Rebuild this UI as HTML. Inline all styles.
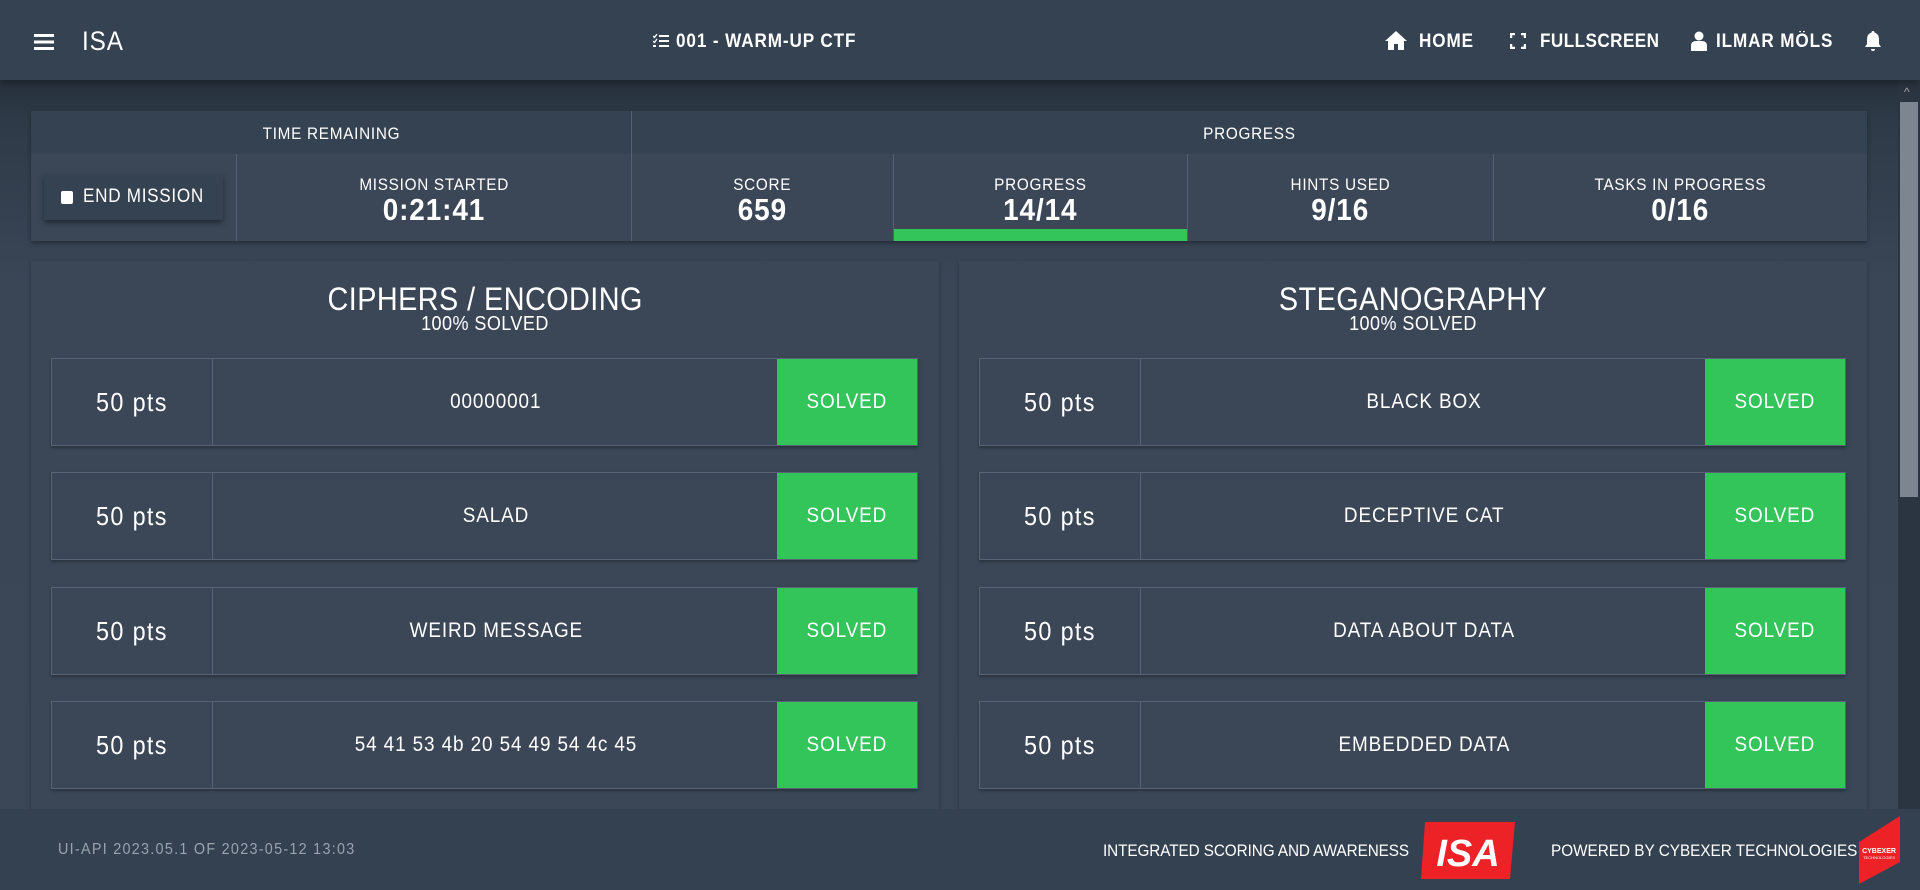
<!DOCTYPE html>
<html><head><meta charset="utf-8"><style>
*{box-sizing:border-box;margin:0;padding:0}
body{width:1920px;height:890px;overflow:hidden;background:#364352;font-family:"Liberation Sans",sans-serif;color:#fff;position:relative}
.hdr{position:absolute;left:0;top:0;width:1920px;height:80px;background:#344251;box-shadow:0 3px 8px rgba(0,0,0,.35);z-index:3}
.main{position:absolute;left:0;top:80px;width:1898px;height:729px;background:linear-gradient(#27313d 0,#2e3a47 40px,#3a4656 200px,#3b4757 100%)}
.sb{position:absolute;left:1898px;top:80px;width:22px;height:729px;background:#2b3541}
.sb .th{position:absolute;left:2px;top:22px;width:18px;height:395px;background:#7d8590}
.abs{position:absolute}
.t{position:absolute;white-space:nowrap;text-align:center}
.L{transform:scaleX(.9);transform-origin:0 0}
.c{display:inline-block;transform:scaleX(.9)}
.panel{position:absolute;background:#3b4757;box-shadow:0 2px 4px rgba(0,0,0,.35)}
.cell{position:absolute;top:43px;height:87px;border-left:1px solid #566273}
.lbl{font-size:17px;position:absolute;top:21px;width:100%;text-align:center;letter-spacing:.8px}
.val{font-size:31px;font-weight:bold;position:absolute;top:38px;width:100%;text-align:center;letter-spacing:1px}
.row{position:absolute;left:20px;width:867px;height:88px;border:1px solid #586476;background:#3b4757;box-shadow:0 2px 3px rgba(0,0,0,.3)}
.row .p{position:absolute;left:0;top:0;width:161px;height:86px;border-right:1px solid #586476;font-size:26px;line-height:86px;text-align:center;letter-spacing:1.5px}
.row .n{position:absolute;left:161px;top:0;width:566px;height:86px;font-size:21px;line-height:86px;text-align:center;letter-spacing:1px}
.row .s{position:absolute;right:0;top:0;width:140px;height:86px;background:#33c45a;font-size:21px;line-height:86px;text-align:center;letter-spacing:1px}
.foot{position:absolute;left:0;top:809px;width:1920px;height:81px;background:#334150}
</style></head><body>
<div class="hdr">
 <svg class="abs" style="left:34px;top:34px" width="20" height="16"><rect y="0" width="20" height="3" fill="#fff"/><rect y="6.5" width="20" height="3" fill="#fff"/><rect y="13" width="20" height="3" fill="#fff"/></svg>
 <div class="t L" style="left:82px;top:26px;font-size:27px;letter-spacing:1px">ISA</div>
 <svg class="abs" style="left:653px;top:34px" width="16" height="14" fill="#fff"><path d="M0 2l1.5 1.5L4 0" stroke="#fff" fill="none" stroke-width="1.3"/><rect x="6" y="1" width="10" height="2"/><path d="M0 7l1.5 1.5L4 5" stroke="#fff" fill="none" stroke-width="1.3"/><rect x="6" y="6" width="10" height="2"/><rect x="0" y="11" width="3" height="2"/><rect x="6" y="11" width="10" height="2"/></svg>
 <div class="t L" style="left:676px;top:31px;font-size:19px;font-weight:bold;letter-spacing:1px">001 - WARM-UP CTF</div>
 <svg class="abs" style="left:1385px;top:31px" width="22" height="19" fill="#fff"><path d="M11 0L0 10h3v9h6v-6h4v6h6v-9h3z"/></svg>
 <div class="t L" style="left:1419px;top:31px;font-size:19px;font-weight:bold;letter-spacing:1px">HOME</div>
 <svg class="abs" style="left:1510px;top:33px" width="16" height="16" fill="none" stroke="#fff" stroke-width="2.5"><path d="M1 5V1h4M11 1h4v4M15 11v4h-4M5 15H1v-4"/></svg>
 <div class="t L" style="left:1540px;top:31px;font-size:19px;font-weight:bold;letter-spacing:.5px">FULLSCREEN</div>
 <svg class="abs" style="left:1691px;top:31px" width="16" height="20" fill="#fff"><circle cx="8" cy="5" r="4.5"/><path d="M0 20v-5q0-5 5-5h6q5 0 5 5v5z"/></svg>
 <div class="t L" style="left:1716px;top:31px;font-size:19px;font-weight:bold;letter-spacing:1px">ILMAR MÖLS</div>
 <svg class="abs" style="left:1865px;top:31px" width="16" height="20" fill="#fff"><path d="M8 0q1.5 0 1.5 1.5Q14 3 14 8v5l2 3H0l2-3V8q0-5 4.5-6.5Q6.5 0 8 0zM6 18h4q0 2-2 2t-2-2z"/></svg>
</div>
<div class="main"></div>
<div class="sb"><div class="th"></div><div class="abs" style="left:6px;top:5px;color:#aaa;font-size:12px">^</div></div>

<div class="panel" style="left:31px;top:111px;width:1836px;height:130px">
 <div class="abs" style="left:0;top:0;width:1836px;height:43px;background:#344251"></div>
 <div class="abs" style="left:600px;top:0;width:1px;height:130px;background:#566273"></div>
 <div class="t" style="left:0;top:13px;width:600px;font-size:17px;letter-spacing:.8px"><span class="c">TIME REMAINING</span></div>
 <div class="t" style="left:600px;top:13px;width:1236px;font-size:17px;letter-spacing:.8px"><span class="c">PROGRESS</span></div>
 <div class="abs" style="left:13px;top:63px;width:179px;height:46px;background:#354252;box-shadow:0 3px 5px rgba(0,0,0,.4)">
  <div class="abs" style="left:17px;top:17px;width:12px;height:13px;background:#fff;border-radius:2px"></div>
  <div class="t L" style="left:39px;top:12px;font-size:19px;letter-spacing:.8px">END MISSION</div>
 </div>
 <div class="cell" style="left:205px;width:395px"><div class="lbl"><span class="c">MISSION STARTED</span></div><div class="val"><span class="c">0:21:41</span></div></div>
 <div class="cell" style="left:600px;width:262px"><div class="lbl"><span class="c">SCORE</span></div><div class="val"><span class="c">659</span></div></div>
 <div class="cell" style="left:862px;width:294px"><div class="lbl"><span class="c">PROGRESS</span></div><div class="val"><span class="c">14/14</span></div><div class="abs" style="left:0;bottom:0;width:294px;height:12px;background:#33c45a"></div></div>
 <div class="cell" style="left:1156px;width:306px"><div class="lbl"><span class="c">HINTS USED</span></div><div class="val"><span class="c">9/16</span></div></div>
 <div class="cell" style="left:1462px;width:374px"><div class="lbl"><span class="c">TASKS IN PROGRESS</span></div><div class="val"><span class="c">0/16</span></div></div>
</div>

<div class="panel" style="left:31px;top:261px;width:908px;height:560px">
 <div class="t" style="left:0;top:20px;width:908px;font-size:32px;letter-spacing:.5px"><span class="c">CIPHERS / ENCODING</span></div>
 <div class="t" style="left:0;top:52px;width:908px;font-size:20px;letter-spacing:.5px"><span class="c">100% SOLVED</span></div>
 <div class="row" style="top:97px"><div class="p"><span class="c">50 pts</span></div><div class="n"><span class="c">00000001</span></div><div class="s"><span class="c">SOLVED</span></div></div>
 <div class="row" style="top:211px"><div class="p"><span class="c">50 pts</span></div><div class="n"><span class="c">SALAD</span></div><div class="s"><span class="c">SOLVED</span></div></div>
 <div class="row" style="top:326px"><div class="p"><span class="c">50 pts</span></div><div class="n"><span class="c">WEIRD MESSAGE</span></div><div class="s"><span class="c">SOLVED</span></div></div>
 <div class="row" style="top:440px"><div class="p"><span class="c">50 pts</span></div><div class="n"><span class="c">54 41 53 4b 20 54 49 54 4c 45</span></div><div class="s"><span class="c">SOLVED</span></div></div>
</div>
<div class="panel" style="left:959px;top:261px;width:908px;height:560px">
 <div class="t" style="left:0;top:20px;width:908px;font-size:32px;letter-spacing:.5px"><span class="c">STEGANOGRAPHY</span></div>
 <div class="t" style="left:0;top:52px;width:908px;font-size:20px;letter-spacing:.5px"><span class="c">100% SOLVED</span></div>
 <div class="row" style="top:97px"><div class="p"><span class="c">50 pts</span></div><div class="n"><span class="c">BLACK BOX</span></div><div class="s"><span class="c">SOLVED</span></div></div>
 <div class="row" style="top:211px"><div class="p"><span class="c">50 pts</span></div><div class="n"><span class="c">DECEPTIVE CAT</span></div><div class="s"><span class="c">SOLVED</span></div></div>
 <div class="row" style="top:326px"><div class="p"><span class="c">50 pts</span></div><div class="n"><span class="c">DATA ABOUT DATA</span></div><div class="s"><span class="c">SOLVED</span></div></div>
 <div class="row" style="top:440px"><div class="p"><span class="c">50 pts</span></div><div class="n"><span class="c">EMBEDDED DATA</span></div><div class="s"><span class="c">SOLVED</span></div></div>
</div>

<div class="foot">
 <div class="t L" style="left:58px;top:32px;font-size:16px;color:#9aa3ad;letter-spacing:1.4px">UI-API 2023.05.1 OF 2023-05-12 13:03</div>
 <div class="t L" style="left:1103px;top:32px;font-size:17px;letter-spacing:-.1px">INTEGRATED SCORING AND AWARENESS</div>
 <svg class="abs" style="left:1421px;top:13px" width="94" height="57"><polygon points="4,0 94,0 89,57 0,57" fill="#ec2227"/><text x="47" y="44" text-anchor="middle" font-family="Liberation Sans" font-weight="bold" font-style="italic" font-size="38" fill="#fff">ISA</text></svg>
 <div class="t L" style="left:1551px;top:32px;font-size:17px;letter-spacing:0">POWERED BY CYBEXER TECHNOLOGIES</div>
 <svg class="abs" style="left:1859px;top:7px" width="41" height="68"><polygon points="0,26 41,0 41,46 0,68" fill="#ec2227"/><text x="20" y="37" text-anchor="middle" font-family="Liberation Sans" font-weight="bold" font-size="7" fill="#fff">CYBEXER</text><text x="20" y="43" text-anchor="middle" font-family="Liberation Sans" font-size="4" fill="#fff">TECHNOLOGIES</text></svg>
</div>
</body></html>
